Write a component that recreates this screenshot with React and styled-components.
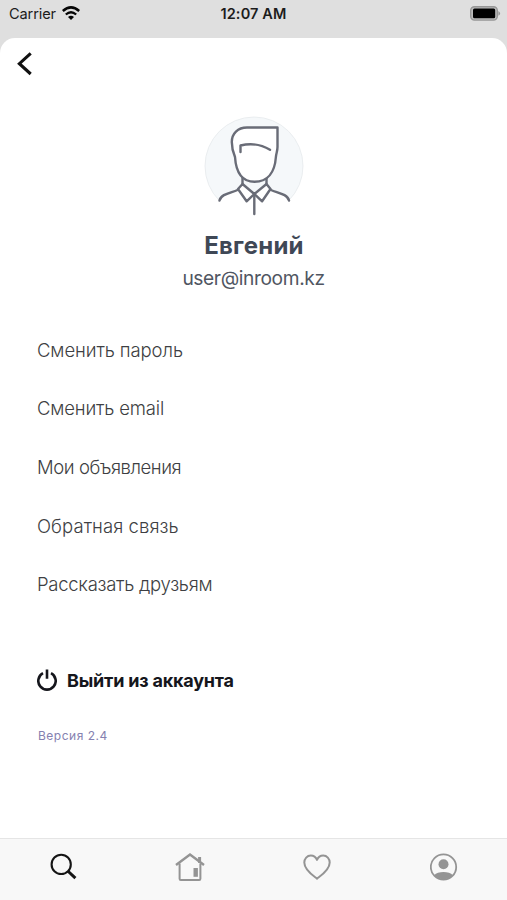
import React from "react";
import styled, { createGlobalStyle } from "styled-components";

const menu = [
	{ title: "Сменить пароль", spacing: "-0.1px" },
	{ title: "Сменить email", spacing: "-0.17px" },
	{ title: "Мои объявления", spacing: "-0.42px" },
	{ title: "Обратная связь", spacing: "0.07px" },
	{ title: "Рассказать друзьям", spacing: "-0.28px" },
];

function App() {
	return (
		<>
			<GlobalStyle />
			<Screen>
				<StatusBar>
					<Carrier>
						<span>Carrier</span>
						<WifiIcon />
					</Carrier>
					<Time>12:07 AM</Time>
					<BatteryIcon />
				</StatusBar>
				<Sheet>
					<BackButton aria-label="Назад">
						<svg width="16" height="24" viewBox="0 0 16 24" fill="none">
							<path d="M13.7 1.4 2.4 11.7l11.3 10.3" stroke="#111" strokeWidth="3.1" />
						</svg>
					</BackButton>
					<Profile>
						<Avatar />
						<Name>Евгений</Name>
						<Email>user@inroom.kz</Email>
					</Profile>
					<Menu>
						{menu.map((item) => (
							<MenuItem key={item.title} $spacing={item.spacing}>
								{item.title}
							</MenuItem>
						))}
					</Menu>
					<Logout>
						<svg width="20" height="23" viewBox="0 0 20 23" fill="none">
							<path
								d="M6 4.2a8.7 8.7 0 1 0 8 0M10 .5v9.2"
								stroke="#15161c"
								strokeWidth="2.6"
							/>
						</svg>
						<span>Выйти из аккаунта</span>
					</Logout>
					<Version>Версия 2.4</Version>
				</Sheet>
				<TabBar>
					<Tab aria-label="Поиск">
						<svg width="28" height="28" viewBox="0 0 28 28" fill="none" stroke="#151515">
							<circle cx="12.2" cy="11.4" r="9.6" strokeWidth="2.1" />
							<path d="m18.8 18 7.6 7.2" strokeWidth="3" />
						</svg>
					</Tab>
					<Tab aria-label="Дом">
						<svg width="30" height="28" viewBox="0 0 30 28" fill="none" stroke="#949494">
							<path d="M1 12 15 1.5 29 12" strokeWidth="2.4" />
							<path d="M4.6 10.5v15.2q0 1.2 1.2 1.2h18.4q1.2 0 1.2-1.2V10.5" strokeWidth="2" />
							<path d="M24.6 4v6" strokeWidth="3" />
							<path d="M20.7 15v8.8" strokeWidth="4.4" />
						</svg>
					</Tab>
					<Tab aria-label="Избранное">
						<svg width="28" height="26" viewBox="0 0 28 26" fill="none">
							<path
								d="M14 24.6C10 21.5 1.3 16.3 1.3 8.6c0-4 2.8-7.1 6.5-7.1 2.7 0 5 1.5 6.2 4.4 1.2-2.9 3.5-4.4 6.2-4.4 3.7 0 6.5 3.1 6.5 7.1C26.7 16.3 18 21.5 14 24.6Z"
								stroke="#949494"
								strokeWidth="2"
								strokeLinejoin="round"
							/>
						</svg>
					</Tab>
					<Tab aria-label="Профиль">
						<svg width="28" height="28" viewBox="0 0 28 28">
							<circle cx="13.5" cy="14" r="12.7" fill="none" stroke="#949494" strokeWidth="1.8" />
							<circle cx="13.5" cy="11.2" r="5" fill="#949494" />
							<path d="M4.2 22.2C7.5 18 19.5 18 22.8 22.2A12.5 12.5 0 0 1 4.2 22.2Z" fill="#949494" />
						</svg>
					</Tab>
				</TabBar>
			</Screen>
		</>
	);
}

function WifiIcon() {
	return (
		<svg width="18" height="14" viewBox="0 0 18 14" fill="none" stroke="#050505">
			<path d="M.8 5q8.2-7.2 16.4 0" strokeWidth="2.6" />
			<path d="M3.8 8.5q5.2-4.6 10.4 0" strokeWidth="2.3" />
			<path d="M6 11q3-2.6 6 0L9 13.9Z" fill="#050505" stroke="none" />
		</svg>
	);
}

function BatteryIcon() {
	return (
		<svg width="31" height="15" viewBox="0 0 31 15">
			<rect x=".7" y=".7" width="26.6" height="13.4" rx="3.8" fill="#bcbcbc" stroke="#969696" strokeWidth="1.4" />
			<rect x="3" y="2.6" width="22.2" height="9.6" rx="1.5" fill="#000" />
			<path d="M28.4 5q3.4 2.4 0 4.8Z" fill="#969696" />
		</svg>
	);
}

function Avatar() {
	return (
		<svg width="100" height="100" viewBox="0 0 100 100" fill="none">
			<circle cx="50" cy="50" r="49" fill="#f5f8fa" stroke="#e6eaec" strokeWidth=".8" />
			{/* shirt, drawn under the head */}
			<path d="M15 84c3-6.5 11-6.5 18-10.5l5-5L50 78l12-9.5 5 5c7 4 15 4 18 10.5L82 89 70 100H32L17 88Z" fill="#fff" />
			<g stroke="#696c77" strokeWidth="2.4" strokeLinejoin="round" strokeLinecap="round">
				<path d="M38.5 60v9M62.5 60v9" fill="#fff" />
				<path
					d="M43 11.5h30.5V31c0 4-1.3 6-1.6 10-1.1 15-8 24.8-21.4 24.8S32 56 31 41C28 34 27.8 31 27.8 26c0-8.5 6-14.5 15.2-14.5Z"
					fill="#fff"
				/>
				<path d="M36.5 36v-6.5c9-2.2 20-1.5 29.5 4.3" />
				<path d="M38.5 68 34 73l8.6 12.3L50.3 78ZM62.5 68l4 5-8.4 12.3L50.3 78Z" fill="#fff" />
				<path d="M33.5 74c-7 3-16.5 4-18 10.5M67 74c7 3 16.5 4 18 10.5M50.3 78v20" />
			</g>
		</svg>
	);
}

const GlobalStyle = createGlobalStyle`
	* {
		box-sizing: border-box;
	}
	body {
		margin: 0;
		font-family: Inter, "Liberation Sans", sans-serif;
	}
	svg {
		display: block;
		flex-shrink: 0;
	}
	button {
		border: 0;
		padding: 0;
		background: none;
		font: inherit;
	}
`;
const Screen = styled.div`
	height: 900px;
	display: flex;
	flex-direction: column;
	background: #dfdfdf;
`;
const StatusBar = styled.header`
	height: 38px;
	padding: 6px 6px 0 9px;
	display: grid;
	grid-template-columns: 1fr auto 1fr;
	align-items: start;
	color: #1c1c1c;
	line-height: 16px;

	> svg {
		justify-self: end;
	}
`;
const Carrier = styled.div`
	display: flex;
	gap: 6px;
	font-size: 14.6px;
	letter-spacing: -0.12px;
`;
const Time = styled.div`
	margin-right: 3px;
	font-size: 14.5px;
	font-weight: 600;
	letter-spacing: 0.15px;
`;
const Sheet = styled.main`
	flex: 1;
	display: flex;
	flex-direction: column;
	align-items: flex-start;
	background: #fff;
	border-radius: 15px 15px 0 0;
`;
const BackButton = styled.button`
	margin: 14px 0 0 17px;
`;
const Profile = styled.section`
	align-self: stretch;
	padding-top: 40px;
	display: flex;
	flex-direction: column;
	align-items: center;
`;
const Name = styled.h1`
	margin: 14px 0 0;
	padding-left: 1px;
	color: #3f4856;
	font-size: 24px;
	font-weight: 700;
	line-height: 32px;
	letter-spacing: 0.25px;
`;
const Email = styled.p`
	margin: 3px 0 0;
	color: #505662;
	font-size: 19.2px;
	line-height: 26px;
	letter-spacing: -0.4px;
`;
const Menu = styled.nav`
	padding: 29.5px 37px 0;
	display: flex;
	flex-direction: column;
	align-items: flex-start;
`;
const MenuItem = styled.button`
	height: 58.6px;
	color: #3e3f43;
	font-size: 18.5px;
	font-weight: 300;
	letter-spacing: ${(props) => props.$spacing};
`;
const Logout = styled.button`
	margin: 56px 0 0 37px;
	display: flex;
	align-items: center;
	gap: 10px;
	color: #15161c;
	font-size: 18px;
	font-weight: 700;
	line-height: 23px;
	letter-spacing: -0.2px;
`;
const Version = styled.p`
	margin: 36px 0 0 38px;
	color: #8581b0;
	font-size: 12px;
	line-height: 16px;
	letter-spacing: 0.5px;
`;
const TabBar = styled.nav`
	height: 62px;
	padding-top: 14px;
	display: grid;
	grid-template-columns: repeat(4, 1fr);
	align-items: start;
	background: #f8f8f8;
	border-top: 1px solid #e5e5e5;
`;
const Tab = styled.button`
	height: 28px;
	display: flex;
	align-items: center;
	justify-content: center;
`;

export default App;
